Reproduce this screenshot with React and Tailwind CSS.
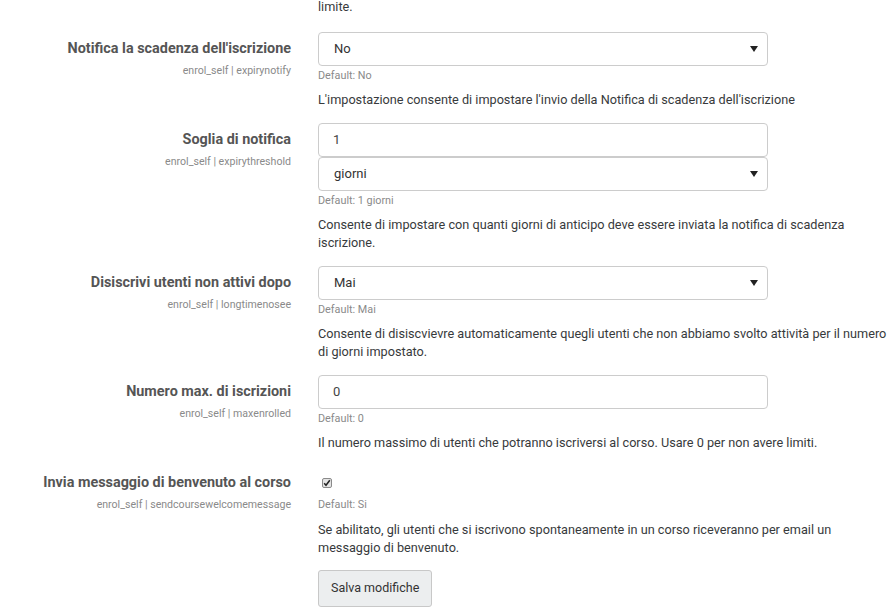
import React from 'react';

const font = { fontFamily: 'Roboto, "Liberation Sans", sans-serif' };

function Arrow() {
  return (
    <svg width="8" height="6" viewBox="0 0 8 6" className="absolute right-[9px] top-1/2 -translate-y-1/2">
      <path d="M0 0h8L4 6z" fill="#222" />
    </svg>
  );
}

function Select({ value }) {
  return (
    <div className="relative h-[34px] w-[450px] rounded-[4px] border border-[#ccc] bg-white flex items-center pl-[15px] text-[13px] text-[#333]">
      {value}
      <Arrow />
    </div>
  );
}

function TextInput({ value }) {
  return (
    <div className="h-[34px] w-[450px] rounded-[4px] border border-[#ccc] bg-white flex items-center pl-[14px] text-[13px] text-[#444]">
      {value}
    </div>
  );
}

function Check() {
  return (
    <span className="inline-flex w-[10px] h-[10px] rounded-[2px] border border-[#8a8a8a] bg-[#e4e4e4] items-center justify-center ml-[4px]">
      <svg width="8" height="8" viewBox="0 0 8 8">
        <path d="M1.2 4.2l1.8 2 3.8-5" fill="none" stroke="#222" strokeWidth="1.5" />
      </svg>
    </span>
  );
}

function Row({ label, name, children, def, desc, descGap = 'mt-[8px]' }) {
  return (
    <div className="flex">
      <div className="w-[291px] shrink-0 text-right pt-[8px]">
        <div className="text-[14.4px] font-bold text-[#555] leading-[18px]">{label}</div>
        <div className="text-[10.6px] text-[#8a8a8a] leading-[14px] mt-[6px]">{name}</div>
      </div>
      <div className="ml-[27px] w-[572px]">
        {children}
        <div className="text-[10.8px] text-[#8a8a8a] leading-[14px] mt-[3px]">{def}</div>
        <div className={`text-[12.7px] text-[#373a3c] leading-[18px] ${descGap}`}>{desc}</div>
      </div>
    </div>
  );
}

export default function App() {
  return (
    <div className="w-[892px] h-[614px] overflow-hidden bg-white" style={font}>
      <div className="pl-[318px] text-[12.7px] text-[#373a3c] leading-[18px] -mt-[2px]">limite.</div>
      <div className="mt-[16px] flex flex-col gap-[14px]">
        <Row label="Notifica la scadenza dell'iscrizione" name="enrol_self | expirynotify" def="Default: No"
          desc="L'impostazione consente di impostare l'invio della Notifica di scadenza dell'iscrizione">
          <Select value="No" />
        </Row>
        <Row label="Soglia di notifica" name="enrol_self | expirythreshold" def="Default: 1 giorni"
          desc="Consente di impostare con quanti giorni di anticipo deve essere inviata la notifica di scadenza iscrizione.">
          <TextInput value="1" />
          <Select value="giorni" />
        </Row>
        <Row label="Disiscrivi utenti non attivi dopo" name="enrol_self | longtimenosee" def="Default: Mai"
          desc="Consente di disiscvievre automaticamente quegli utenti che non abbiamo svolto attività per il numero di giorni impostato.">
          <Select value="Mai" />
        </Row>
        <Row label="Numero max. di iscrizioni" name="enrol_self | maxenrolled" def="Default: 0"
          desc="Il numero massimo di utenti che potranno iscriversi al corso. Usare 0 per non avere limiti.">
          <TextInput value="0" />
        </Row>
        <div>
          <Row label="Invia messaggio di benvenuto al corso" name="enrol_self | sendcoursewelcomemessage" def="Default: Si"
            descGap="mt-[9px]"
            desc={<>Se abilitato, gli utenti che si iscrivono spontaneamente in un corso riceveranno per email un<br />messaggio di benvenuto.</>}>
            <div className="h-[29px] pt-[12px] flex items-start">
              <Check />
            </div>
          </Row>
          <div className="pl-[318px] mt-[13px]">
            <button className="h-[37px] px-[12px] rounded-[3px] border border-[#c8c8c8] bg-[#eceeef] text-[12.5px] text-[#333]">Salva modifiche</button>
          </div>
        </div>
      </div>
    </div>
  );
}
